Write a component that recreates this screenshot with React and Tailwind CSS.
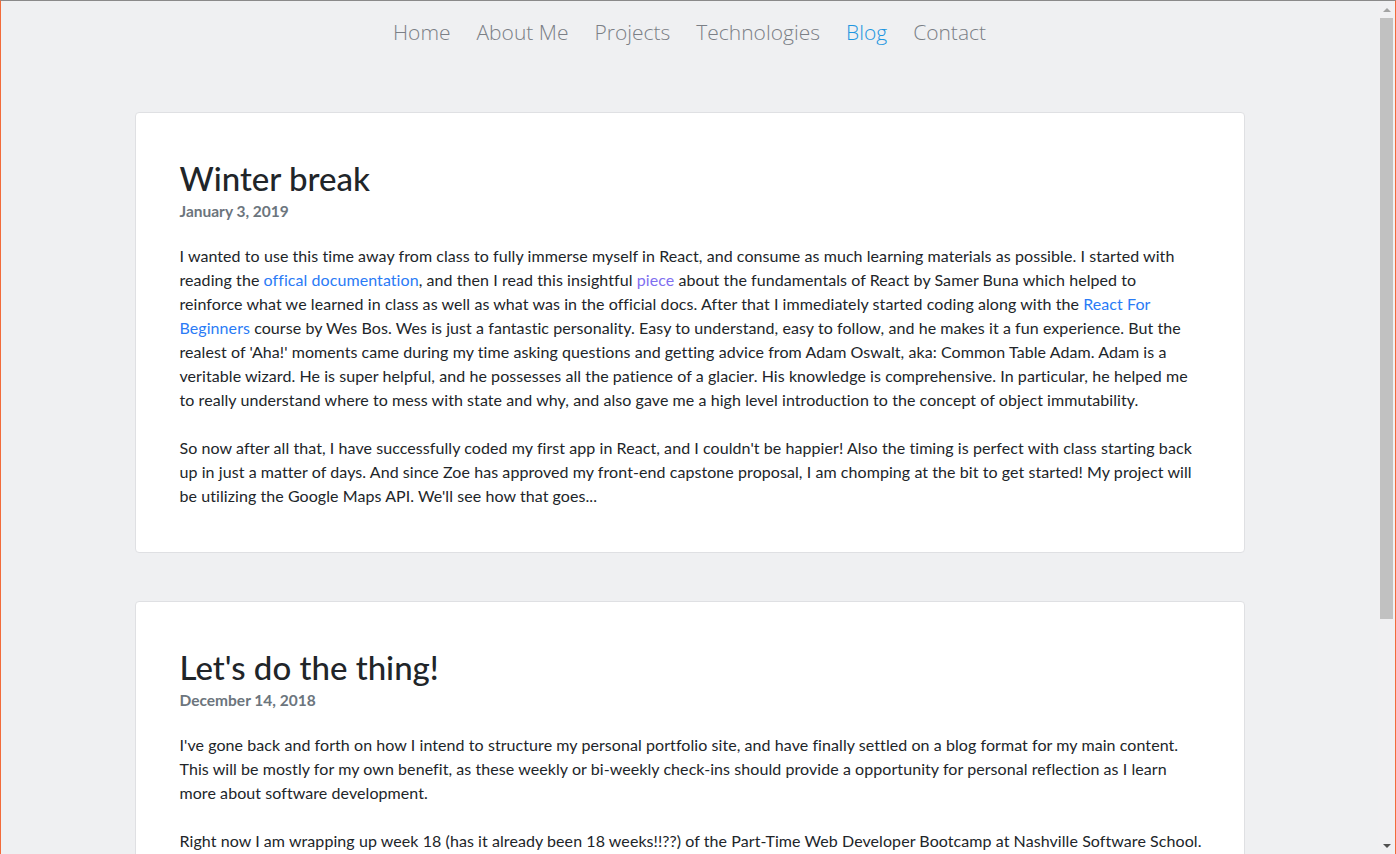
const NAV = ["Home", "About Me", "Projects", "Technologies", "Blog", "Contact"];

const bodyFont = { fontFamily: "Lato, 'Noto Sans', sans-serif" };

function Link({ children, visited }) {
  return (
    <a href="#" className={visited ? "text-[#7f6ff0]" : "text-[#2a7bf6]"}>
      {children}
    </a>
  );
}

function Post({ title, date, children }) {
  return (
    <article className="rounded-[4px] border border-[#dfe0e3] bg-white px-[44px] pb-[44px] pt-[44px]">
      <h2 className="text-[33px] font-medium leading-[42px] text-[#212529]">{title}</h2>
      <div className="mb-[21px] text-[15.5px] font-bold leading-[24px] text-[#6c757d]">{date}</div>
      <div className="whitespace-nowrap text-[16px] leading-[24px] tracking-[0.07px] text-[#212529]">{children}</div>
    </article>
  );
}

function Scrollbar() {
  return (
    <div className="flex w-[17px] shrink-0 flex-col items-center bg-[#f0f0f2]">
      <div className="flex h-[17px] w-full items-center justify-center">
        <div className="h-0 w-0 border-x-[4px] border-b-[4px] border-x-transparent border-b-[#a3a3a3]" />
      </div>
      <div className="h-[601px] w-[13px] bg-[#c1c1c1]" />
      <div className="flex-1" />
      <div className="flex h-[17px] w-full items-center justify-center">
        <div className="h-0 w-0 border-x-[4px] border-t-[4px] border-x-transparent border-t-[#505050]" />
      </div>
    </div>
  );
}

export default function App() {
  return (
    <div className="flex h-[854px] w-full overflow-hidden border-x border-t border-x-[#f26b3a] border-t-[#8a8a8a] bg-[#eff0f2]" style={bodyFont}>
      <div className="flex-1 overflow-hidden">
        {/* top nav */}
        <nav
          className="flex justify-center gap-[26px] pt-[15px] text-[21px] font-light leading-[32px] text-[#7b7f86]"
          style={{ fontFamily: "'Open Sans', sans-serif" }}
        >
          {NAV.map((item) => (
            <a key={item} href="#" className={item === "Blog" ? "text-[#1e96e0]" : ""}>
              {item}
            </a>
          ))}
        </nav>

        <main className="mx-auto mt-[64px] flex w-[1110px] flex-col gap-[48px]">
          <Post title="Winter break" date="January 3, 2019">
            <p className="mb-[24px]">
              I wanted to use this time away from class to fully immerse myself in React, and consume as much learning materials as possible. I started with
              <br />
              reading the <Link>offical documentation</Link>, and then I read this insightful <Link visited>piece</Link> about the fundamentals of React by Samer Buna which helped to
              <br />
              reinforce what we learned in class as well as what was in the official docs. After that I immediately started coding along with the <Link>React For</Link>
              <br />
              <Link>Beginners</Link> course by Wes Bos. Wes is just a fantastic personality. Easy to understand, easy to follow, and he makes it a fun experience. But the
              <br />
              realest of 'Aha!' moments came during my time asking questions and getting advice from Adam Oswalt, aka: Common Table Adam. Adam is a
              <br />
              veritable wizard. He is super helpful, and he possesses all the patience of a glacier. His knowledge is comprehensive. In particular, he helped me
              <br />
              to really understand where to mess with state and why, and also gave me a high level introduction to the concept of object immutability.
            </p>
            <p>
              So now after all that, I have successfully coded my first app in React, and I couldn't be happier! Also the timing is perfect with class starting back
              <br />
              up in just a matter of days. And since Zoe has approved my front-end capstone proposal, I am chomping at the bit to get started! My project will
              <br />
              be utilizing the Google Maps API. We'll see how that goes...
            </p>
          </Post>

          <Post title="Let's do the thing!" date="December 14, 2018">
            <p className="mb-[24px]">
              I've gone back and forth on how I intend to structure my personal portfolio site, and have finally settled on a blog format for my main content.
              <br />
              This will be mostly for my own benefit, as these weekly or bi-weekly check-ins should provide a opportunity for personal reflection as I learn
              <br />
              more about software development.
            </p>
            <p>
              Right now I am wrapping up week 18 (has it already been 18 weeks!!??) of the Part-Time Web Developer Bootcamp at Nashville Software School.
            </p>
          </Post>
        </main>
      </div>
      <Scrollbar />
    </div>
  );
}
